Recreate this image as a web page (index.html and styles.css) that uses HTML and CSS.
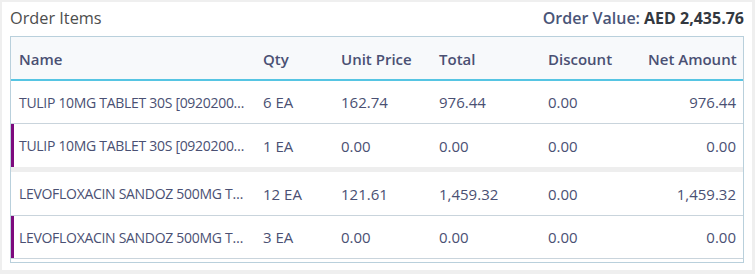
FILE: index.html
```html
<!DOCTYPE html>
<html>
<head>
<meta charset="utf-8">
<link rel="stylesheet" href="styles.css">
</head>
<body>
<div class="card">
  <div class="card-head">
    <h2 class="title">Order Items</h2>
    <div class="order-value"><span class="ov-label">Order Value:</span><span class="ov-amount">AED 2,435.76</span></div>
  </div>
  <div class="table-wrap">
    <table class="items">
      <colgroup>
        <col class="c-name"><col class="c-qty"><col class="c-unit"><col class="c-total"><col class="c-disc"><col class="c-net">
      </colgroup>
      <thead>
        <tr>
          <th>Name</th><th>Qty</th><th>Unit Price</th><th>Total</th><th>Discount</th><th class="num">Net Amount</th>
        </tr>
      </thead>
      <tbody>
        <tr>
          <td class="name">TULIP 10MG TABLET 30S [09202001234]</td><td>6 EA</td><td>162.74</td><td>976.44</td><td>0.00</td><td class="num">976.44</td>
        </tr>
        <tr class="sub">
          <td class="name">TULIP 10MG TABLET 30S [09202001234]</td><td>1 EA</td><td>0.00</td><td>0.00</td><td>0.00</td><td class="num">0.00</td>
        </tr>
        <tr class="gap"><td colspan="6"></td></tr>
        <tr>
          <td class="name">LEVOFLOXACIN SANDOZ 500MG TABLET 7S</td><td>12 EA</td><td>121.61</td><td>1,459.32</td><td>0.00</td><td class="num">1,459.32</td>
        </tr>
        <tr class="sub">
          <td class="name">LEVOFLOXACIN SANDOZ 500MG TABLET 7S</td><td>3 EA</td><td>0.00</td><td>0.00</td><td>0.00</td><td class="num">0.00</td>
        </tr>
      </tbody>
    </table>
  </div>
</div>
</body>
</html>
```

FILE: styles.css
```css
html, body {
  margin: 0;
  padding: 0;
}
body {
  background: #efefef;
  padding: 2px 3px 4px 2px;
  font-family: "Open Sans", "Noto Sans", sans-serif;
  color: #4a5073;
}
.card {
  background: #ffffff;
  width: 734px;
  height: 268px;
  padding: 0 8px 0 8px;
  box-sizing: content-box;
}
.card-head {
  height: 34px;
  display: flex;
  align-items: center;
  justify-content: space-between;
}
.title {
  margin: 0 0 3px 0;
  font-size: 16.3px;
  font-weight: 400;
  color: #4d4d4d;
}
.order-value {
  font-size: 16px;
  margin-bottom: 3px;
  display: flex;
  gap: 4px;
}
.ov-label {
  font-weight: 600;
  color: #4a5578;
}
.ov-amount {
  font-weight: 700;
  color: #333840;
}
.table-wrap {
  border: 1px solid #b9d0dc;
  padding-bottom: 3px;
}
.items {
  width: 100%;
  border-collapse: separate;
  border-spacing: 0;
  table-layout: fixed;
  font-size: 15px;
}
.c-name { width: 244px; }
.c-qty { width: 78px; }
.c-unit { width: 98px; }
.c-total { width: 109px; }
.c-disc { width: 100px; }
.items th {
  background: #f7f9fb;
  height: 44px;
  padding: 2px 8px 0 8px;
  text-align: left;
  font-weight: 600;
  font-size: 15px;
  color: #4a5073;
  border-bottom: 2px solid #56c5e3;
  box-sizing: border-box;
  white-space: nowrap;
}
.items td {
  height: 43px;
  padding: 0 8px;
  border-bottom: 1px solid #c9d4dc;
  white-space: nowrap;
  box-sizing: border-box;
}
.items .num {
  text-align: right;
  padding-right: 7px;
}
.items td.name {
  font-size: 14px;
  letter-spacing: -0.3px;
  overflow: hidden;
  text-overflow: ellipsis;
}
.items tr.sub td:first-child {
  box-shadow: inset 3px 0 0 #7d0a7d;
}
.items tr.sub td {
  border-bottom: none;
}
.items tr.gap td {
  height: 5px;
  padding: 0;
  background: #eeeeee;
  border-bottom: none;
}
.items tr.gap + tr td {
  height: 44px;
}
.items tbody tr:last-child td {
  border-bottom: 1px solid #c9d4dc;
}
```
